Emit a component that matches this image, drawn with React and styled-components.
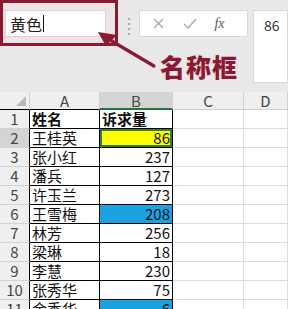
import React from "react";
import styled, { createGlobalStyle } from "styled-components";

const Global = createGlobalStyle`
  html, body { margin: 0; padding: 0; background: #e9e9e9; }
  body { width: 288px; height: 309px; overflow: hidden; }
`;

const CJK = `"Noto Sans CJK SC", "Noto Sans", sans-serif`;

const Page = styled.div`
  width: 288px;
  height: 309px;
  overflow: hidden;
  background: #e9e9e9;
  font-family: ${CJK};
`;

const TopBar = styled.div`
  position: relative;
  height: 92px;
  display: flex;
  align-items: flex-start;
`;

const NameFrame = styled.div`
  box-sizing: border-box;
  width: 118px;
  height: 46px;
  border: 3px solid #8a1a30;
  background: #efe3e5;
  padding: 7px 0 0 2px;
`;

const NameInput = styled.div`
  box-sizing: border-box;
  width: 101px;
  height: 27px;
  background: #fff;
  border: 1px solid #d6d6d6;
  display: flex;
  align-items: center;
  padding-left: 4px;
  font-size: 16px;
  color: #222;
`;

const Caret = styled.span`
  display: inline-block;
  width: 1px;
  height: 17px;
  background: #111;
  margin-left: 1px;
`;

const Dots = styled.div`
  margin: 18px 0 0 3px;
  width: 16px;
  display: flex;
  flex-direction: column;
  align-items: center;
  gap: 3px;
  span {
    width: 2px;
    height: 2px;
    background: #a9a9a9;
  }
`;

const Tools = styled.div`
  box-sizing: border-box;
  margin: 10px 0 0 3px;
  width: 109px;
  height: 27px;
  background: #fff;
  border: 1px solid #d9d9d9;
  display: flex;
  align-items: center;
  padding-left: 13px;
  gap: 19px;
  color: #a0a0a0;
`;

const Fx = styled.span`
  font-family: "Liberation Serif", serif;
  font-style: italic;
  font-size: 14px;
  color: #555;
  margin-left: -2px;
`;

const FormulaInput = styled.div`
  box-sizing: border-box;
  margin: 10px 0 0 5px;
  width: 35px;
  height: 73px;
  background: #fff;
  border: 1px solid #d9d9d9;
  padding: 4px 0 0 10px;
  font-size: 14px;
  line-height: 20px;
  color: #333;
`;

const Arrow = styled.svg`
  position: absolute;
  left: 0;
  top: 0;
`;

const Label = styled.div`
  position: absolute;
  left: 160px;
  top: 48px;
  font-size: 25px;
  font-weight: 900;
  letter-spacing: 1px;
  color: #8a1a34;
  text-shadow: 0 0 2px #f6d7dd;
`;

const Sheet = styled.div`
  display: grid;
  grid-template-columns: 30px 70px 73px 71px 44px;
  grid-template-rows: 18px;
  grid-auto-rows: 19px;
`;

const Cell = styled.div`
  box-sizing: border-box;
  font-family: ${CJK};
  font-size: 15px;
  line-height: 18px;
  white-space: nowrap;
  color: #111;
  background: ${(p) => p.$bg || "#fff"};
  border-right: 1px solid ${(p) => (p.$line ? "#000" : "#dcdcdc")};
  border-bottom: 1px solid ${(p) => (p.$line ? "#000" : "#dcdcdc")};
  padding: 0 2px;
  text-align: ${(p) => p.$align || "left"};
  font-weight: ${(p) => (p.$bold ? 700 : 400)};
  box-shadow: ${(p) => (p.$selected ? "inset 0 0 0 2px #2f7d4a" : "none")};
`;

const Head = styled.div`
  box-sizing: border-box;
  font-family: ${CJK};
  font-size: 15px;
  line-height: 18px;
  text-align: center;
  color: #444;
  background: ${(p) => (p.$active ? "#d4d4d4" : "#efefef")};
  border-right: 1px solid #cfcfcf;
  border-bottom: ${(p) => (p.$active ? "2px solid #217346" : p.$line ? "1px solid #000" : "1px solid #cfcfcf")};
`;

const RowHead = styled.div`
  box-sizing: border-box;
  font-family: ${CJK};
  font-size: 15px;
  line-height: 18px;
  text-align: center;
  color: #444;
  background: ${(p) => (p.$active ? "#d4d4d4" : "#efefef")};
  border-bottom: 1px solid #d2d2d2;
  border-right: 1px solid #000;
`;

const Corner = styled.div`
  box-sizing: border-box;
  background: #efefef;
  border-right: 1px solid #cfcfcf;
  border-bottom: 1px solid #000;
  position: relative;
  &::after {
    content: "";
    position: absolute;
    right: 3px;
    bottom: 3px;
    border-left: 10px solid transparent;
    border-bottom: 10px solid #b8b8b8;
  }
`;

const rows = [
  ["姓名", "诉求量", null, true],
  ["王桂英", "86", "#ffff00"],
  ["张小红", "237"],
  ["潘兵", "127"],
  ["许玉兰", "273"],
  ["王雪梅", "208", "#1aa3e0"],
  ["林芳", "256"],
  ["梁琳", "18"],
  ["李慧", "230"],
  ["张秀华", "75"],
  ["金秀华", "6", "#1aa3e0"],
];

export default function App() {
  return (
    <Page>
      <Global />
      <TopBar>
        <NameFrame>
          <NameInput>
            黄色
            <Caret />
          </NameInput>
        </NameFrame>
        <Dots>
          <span />
          <span />
          <span />
          <span />
        </Dots>
        <Tools>
          <svg width="11" height="11" viewBox="0 0 11 11">
            <path d="M1 1 L10 10 M10 1 L1 10" stroke="#a8a8a8" strokeWidth="1.3" />
          </svg>
          <svg width="14" height="11" viewBox="0 0 14 11">
            <path d="M1 6 L5 10 L13 1" stroke="#a8a8a8" strokeWidth="1.3" fill="none" />
          </svg>
          <Fx>fx</Fx>
        </Tools>
        <FormulaInput>86</FormulaInput>
        <Arrow width="170" height="80" viewBox="0 0 170 80">
          <path d="M154 66 L110 40" stroke="#8a1a30" strokeWidth="3.2" strokeLinecap="round" />
          <path d="M98 32 L117 35 L106 46 Z" fill="#8a1a30" />
        </Arrow>
        <Label>名称框</Label>
      </TopBar>
      <Sheet>
        <Corner />
        <Head $line>A</Head>
        <Head $active>B</Head>
        <Head>C</Head>
        <Head>D</Head>
        {rows.map(([name, val, bg, bold], i) => (
          <React.Fragment key={i}>
            <RowHead $active={i === 1}>{i + 1}</RowHead>
            <Cell $line $bold={bold}>
              {name}
            </Cell>
            <Cell $line $bold={bold} $bg={bg} $align={bold ? "left" : "right"} $selected={i === 1}>
              {val}
            </Cell>
            <Cell />
            <Cell />
          </React.Fragment>
        ))}
      </Sheet>
    </Page>
  );
}
